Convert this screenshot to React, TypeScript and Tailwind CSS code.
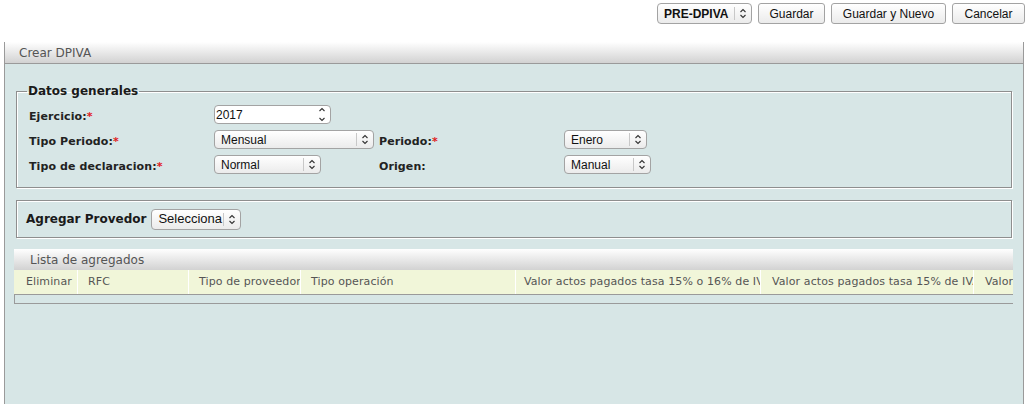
import React from "react";

function Chevrons({ className = "" }: { className?: string }) {
  return (
    <svg width="8" height="11" viewBox="0 0 8 11" className={className}>
      <path d="M1.5 4L4 1.5L6.5 4" fill="none" stroke="#333" strokeWidth="1.1" />
      <path d="M1.5 7L4 9.5L6.5 7" fill="none" stroke="#333" strokeWidth="1.1" />
    </svg>
  );
}

function FakeSelect({
  value,
  width,
  bold = false,
  big = false,
}: {
  value: string;
  width: string;
  bold?: boolean;
  big?: boolean;
}) {
  return (
    <div
      className={`${width} ${big ? "h-[21px] text-[13px]" : "h-[19px] text-[12px]"} flex items-center rounded-[4px] border border-[#a3a3a3] bg-gradient-to-b from-white to-[#ebebeb] font-['Liberation_Sans',Arial,sans-serif] text-[#111]`}
    >
      <span className={`flex-1 truncate pl-[6px] ${bold ? "font-bold" : ""}`}>{value}</span>
      <span className="h-[13px] w-px bg-[#c8c8c8]" />
      <span className="flex w-[16px] justify-center">
        <Chevrons />
      </span>
    </div>
  );
}

function Btn({ label, width }: { label: string; width: string }) {
  return (
    <button
      className={`${width} h-[21px] rounded-[3px] border border-[#a3a3a3] bg-gradient-to-b from-white to-[#ebebeb] font-['Liberation_Sans',Arial,sans-serif] text-[12px] text-[#111]`}
    >
      {label}
    </button>
  );
}

function Label({ text, req = false }: { text: string; req?: boolean }) {
  return (
    <span className="pt-[3px] text-[11px] leading-[13px] font-bold tracking-[0.1px] text-[#222]">
      {text}
      {req && <span className="text-[#e0201c]">*</span>}
    </span>
  );
}

const columns = [
  { name: "Eliminar", w: "w-[64px]", pl: "pl-[12px]" },
  { name: "RFC", w: "w-[111px]", pl: "pl-[10px]" },
  { name: "Tipo de proveedor", w: "w-[112px]", pl: "pl-[10px]" },
  { name: "Tipo operación", w: "w-[215px]", pl: "pl-[10px]" },
  { name: "Valor actos pagados tasa 15% o 16% de IVA", w: "w-[245px]", pl: "pl-[8px]" },
  { name: "Valor actos pagados tasa 15% de IVA", w: "w-[213px]", pl: "pl-[11px]" },
  { name: "Valor actos pagados tasa 10% u 11% de IVA", w: "w-[200px]", pl: "pl-[11px]" },
];

export default function App() {
  return (
    <div className="h-[404px] overflow-hidden bg-white font-['DejaVu_Sans',sans-serif]">
      <div className="flex h-[42px] items-start justify-end gap-[6px] pr-[4px] pt-[3px]">
        <div className="w-[95px]">
          <FakeSelect value="PRE-DPIVA" width="w-[95px] !h-[21px]" bold />
        </div>
        <Btn label="Guardar" width="w-[67px]" />
        <Btn label="Guardar y Nuevo" width="w-[115px]" />
        <Btn label="Cancelar" width="w-[73px]" />
      </div>

      <div className="ml-[4px] h-[362px] w-[1020px] border-x border-[#9a9a9a] bg-[#d7e6e6]">
        <div className="flex h-[22px] items-center border-b border-[#9a9a9a] bg-gradient-to-b from-white to-[#d2d2d2] pl-[14px] text-[12px] text-[#555]">
          Crear DPIVA
        </div>

        <div className="pl-[11px] pr-[11px] pt-[18px]">
          <fieldset className="border border-[#8e8e8e] px-[12px] pb-[13px] pt-[5px] shadow-[inset_1px_1px_0_#fff,1px_1px_0_#fff]">
            <legend className="-ml-[2px] px-[1px] text-[12px] font-bold text-[#1a1a1a]">Datos generales</legend>
            <div className="grid grid-cols-[185px_165px_185px_1fr] items-center gap-y-[6px]">
              <Label text="Ejercicio:" req />
              <div className="flex h-[19px] w-[117px] items-center rounded-[4px] border border-[#a3a3a3] bg-white font-['Liberation_Sans',Arial,sans-serif] text-[12px] text-[#111]">
                <span className="flex-1 pl-[1px]">2017</span>
                <span className="flex w-[16px] justify-center">
                  <svg width="8" height="15" viewBox="0 0 8 15">
                    <path d="M1.5 4L4 1.5L6.5 4" fill="none" stroke="#333" strokeWidth="1.1" />
                    <path d="M1.5 11L4 13.5L6.5 11" fill="none" stroke="#333" strokeWidth="1.1" />
                  </svg>
                </span>
              </div>
              <span />
              <span />

              <Label text="Tipo Periodo:" req />
              <FakeSelect value="Mensual" width="w-[160px]" />
              <Label text="Periodo:" req />
              <FakeSelect value="Enero" width="w-[83px]" />

              <Label text="Tipo de declaracion:" req />
              <FakeSelect value="Normal" width="w-[107px]" />
              <Label text="Origen:" />
              <FakeSelect value="Manual" width="w-[87px]" />
            </div>
          </fieldset>

          <div className="mt-[12px] flex h-[38px] items-center gap-[5px] border border-[#8e8e8e] pl-[9px] shadow-[inset_1px_1px_0_#fff,1px_1px_0_#fff]">
            <span className="text-[12px] font-bold text-[#1a1a1a]">Agregar Provedor</span>
            <FakeSelect value="Selecciona" width="w-[90px]" big />
          </div>
        </div>

        <div className="ml-[9px] mt-[11px] w-[999px] overflow-hidden">
          <div className="flex h-[21px] items-center bg-gradient-to-b from-white to-[#d2d2d2] pl-[16px] text-[12px] text-[#555]">
            Lista de agregados
          </div>
          <div className="flex h-[25px] border-b border-[#9a9a9a] bg-[#f1f6d9]">
            {columns.map((c) => (
              <div
                key={c.name}
                className={`${c.w} ${c.pl} flex shrink-0 items-center overflow-hidden whitespace-nowrap border-r border-white text-[11px] tracking-[0.1px] text-[#555]`}
              >
                {c.name}
              </div>
            ))}
          </div>
          <div className="h-[9px] border-b border-l border-[#9a9a9a]" />
        </div>
      </div>
    </div>
  );
}
